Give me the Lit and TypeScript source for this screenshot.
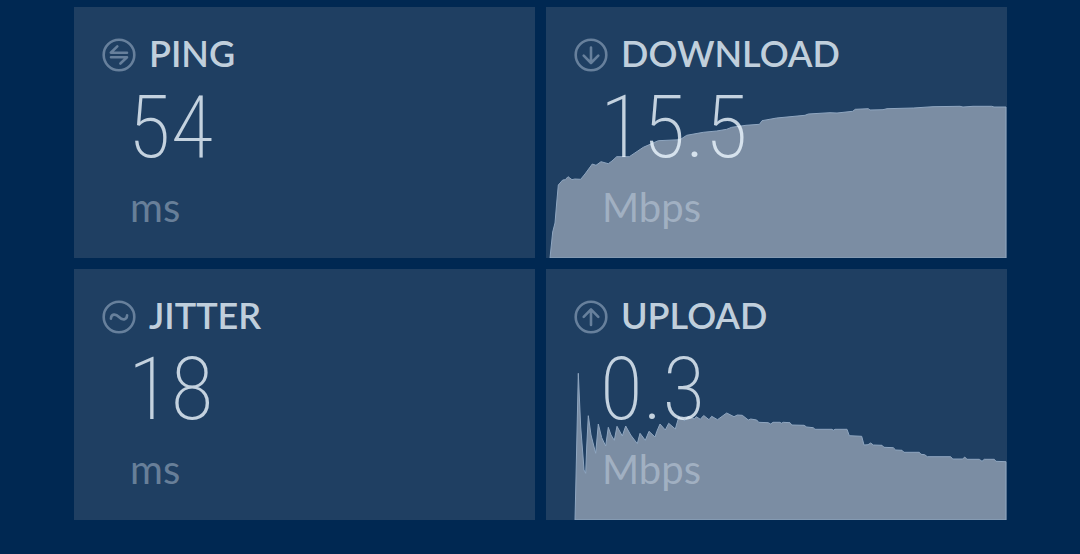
import { LitElement, html, svg, css, nothing } from "lit";
import { customElement, property } from "lit/decorators.js";

type Kind = "ping" | "download" | "jitter" | "upload";

const glyphs = {
  ping: svg`<path d="M15.3 8.4 8.8 14.7H25M9 19.3h16l-6.600 6.200" />`,
  download: svg`<path d="M17 9.600V25M9.700 17.600 17 25l7.300-7.400" />`,
  jitter: svg`<path d="M8.900 18.600c.4-4.800 4.600-5.200 8.100-1.600 3.500 3.600 7.700 3.200 8.100-1.600" />`,
  upload: svg`<path d="M17 25V9.600M9.700 16.800 17 9.400l7.300 7.400" />`,
};

const downloadSpeed =
  "4,251 6.7,225 9,216 10.5,198 12.3,178 16.7,173 19.3,172.7 22,169.7 26,172.7 28.7,172 34.7,172.3 39,167 46.3,157 50,158.3 55,154.7 62.3,156.7 66,154 70.7,149.7 83.3,149.7 97.3,140.3 112.3,133.7 134,132.7 140.7,128.3 157.3,125.3 170.7,124 180.7,122.3 185.7,120.3 200,118.3 213.5,117.3 216,113.7 230.7,111 259,108.3 262.3,107 284,105.7 291,106 306.7,104.3 309.3,102.3 322.3,101.7 324,103 337,102.7 341,101.7 367.3,101 387,99.7 414,99.3 417,100 427,99.3 445.7,99.3 448,100 460,100 460,251";

const uploadSpeed =
  "29,251 30,208 32.3,104.3 34.7,158 37.3,191 38,201 39.7,204.3 40.7,178 42.3,146.7 45,166 49.7,184.3 52.3,155 55.7,168.7 59.7,177 62.3,158.3 65,166 68.3,171.3 71,157.3 76.3,167 79.7,157 84.7,166 91.3,174.7 94,164.3 99.3,171.3 103,162.3 109,168 110.7,162.7 114,155 119.3,161 122.7,154.3 129.3,160 132.7,148.3 139,151.7 142,147.3 148.3,150 150.3,147.7 154.3,150.3 157.7,146.5 163,150.7 165.7,147.3 171.5,150.7 180.7,144 188,147.7 191.3,146 196.3,146.3 202.3,151 204.7,150 210.7,151 212.7,153.3 222.3,153.7 224.7,155 227,153.3 234,153.3 235.3,154.3 237.3,153.3 244,153.7 245.7,156 258,156.3 260.7,158 267.3,158.7 269,160.3 286,160.3 287.3,161.3 289,160.3 301,160.3 303.3,166.7 315.7,167.3 318,176 322,175.7 324.7,174 327.3,176 336,176.3 338,178.3 347.3,178.7 349.7,181 356,181.3 358,183.3 373.3,183.3 375,185.3 378.7,185.7 381.3,187.7 404.7,187.7 406.7,190 416.7,190 418.7,188 421,190.3 433.3,190.3 436,192.3 438.3,190.3 448.3,190.3 450,192.3 460,192.7 460,251";

@customElement("result-card")
class ResultCard extends LitElement {
  @property() kind: Kind = "ping";
  @property() value = "";
  @property() unit = "";
  @property() points = "";

  static styles = css`
    :host {
      display: block;
      position: relative;
      padding: 27px 28px;
      background: #1f3f62;
    }
    .chart {
      position: absolute;
      inset: 0;
      width: 100%;
      height: 100%;
    }
    .area {
      fill: #7b8da3;
      stroke: #8fa6c0;
      stroke-width: 1;
    }
    .content {
      position: relative;
    }
    .heading {
      display: flex;
      align-items: flex-end;
      gap: 13px;
      margin: 0;
      font-size: 36px;
      font-weight: 600;
      line-height: 38px;
      text-transform: uppercase;
      color: rgba(238, 248, 255, 0.8);
    }
    .icon {
      flex: none;
      width: 34px;
      height: 34px;
      fill: none;
      stroke: #67809c;
      stroke-width: 2.6;
      stroke-linecap: round;
      stroke-linejoin: round;
    }
    .value {
      margin: 15px 0 16px 26px;
      font-family: "Roboto Condensed", Roboto, sans-serif;
      font-size: 88px;
      font-weight: 200;
      line-height: 80px;
      color: rgba(238, 248, 255, 0.8);
    }
    .unit {
      margin: 0 0 0 28px;
      font-size: 40px;
      line-height: 48px;
      color: rgba(226, 236, 246, 0.38);
    }
  `;

  render() {
    return html`
      ${this.points
        ? html`<svg class="chart" viewBox="0 0 461 251" preserveAspectRatio="none" aria-hidden="true">
            <polygon class="area" vector-effect="non-scaling-stroke" points=${this.points} />
          </svg>`
        : nothing}
      <div class="content">
        <h2 class="heading">
          <svg class="icon" viewBox="0 0 34 34" aria-hidden="true">
            <circle cx="17" cy="17" r="15.3" />
            ${glyphs[this.kind]}
          </svg>
          <span>${this.kind}</span>
        </h2>
        <p class="value">${this.value}</p>
        <p class="unit">${this.unit}</p>
      </div>
    `;
  }
}

@customElement("app-root")
class AppRoot extends LitElement {
  static styles = css`
    :host {
      display: block;
      box-sizing: border-box;
      min-height: 100vh;
      padding: 7px 73px 0 74px;
      background: #002852;
      font-family: Lato, "Open Sans", sans-serif;
    }
    .grid {
      display: grid;
      grid-template-columns: 1fr 1fr;
      gap: 11px;
    }
  `;

  render() {
    return html`
      <main class="grid">
        <result-card kind="ping" value="54" unit="ms"></result-card>
        <result-card kind="download" value="15.5" unit="Mbps" points=${downloadSpeed}></result-card>
        <result-card kind="jitter" value="18" unit="ms"></result-card>
        <result-card kind="upload" value="0.3" unit="Mbps" points=${uploadSpeed}></result-card>
      </main>
    `;
  }
}
